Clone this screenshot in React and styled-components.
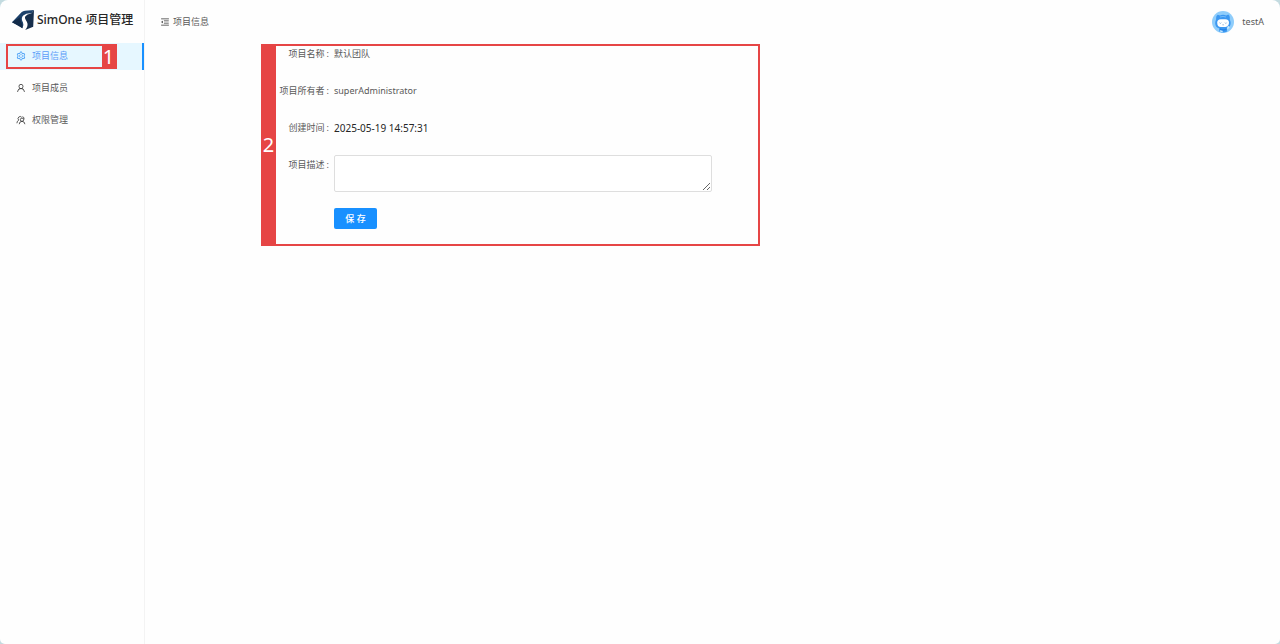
import React from "react";
import styled, { createGlobalStyle, css } from "styled-components";
import { AiOutlineMenuFold, AiOutlineSetting, AiOutlineUser } from "react-icons/ai";

const GlobalStyle = createGlobalStyle`
  *, *::before, *::after { box-sizing: border-box; }
  body {
    margin: 0;
    background: #c3dbe0;
    color: #595959;
    font: 9px/16px "Noto Sans", "Noto Sans CJK SC", sans-serif;
  }
  button, textarea { font: inherit; }
`;

const Shell = styled.div`
  display: flex;
  min-height: 100vh;
  background: #fefefe;
  border-radius: 8px 8px 5px 5px;
  overflow: hidden;
`;

const Sidebar = styled.aside`
  flex: 0 0 145px;
  border-right: 1px solid #f3f3f3;
`;

const Brand = styled.h1`
  display: flex;
  align-items: center;
  gap: 3px;
  height: 43px;
  margin: 0;
  padding: 0 0 3px 12px;
  color: #262626;
  font-size: 12px;
  font-weight: 500;
  line-height: 20px;
  white-space: nowrap;
`;

const Menu = styled.nav`
  display: flex;
  flex-direction: column;
  gap: 5px;
`;

const MenuLink = styled.a`
  position: relative;
  display: flex;
  align-items: center;
  gap: 6px;
  height: 27px;
  padding: 0 0 1px 16px;
  color: #595959;
  text-decoration: none;

  svg { width: 10px; height: 10px; color: #333; }

  ${({ $active }) =>
    $active &&
    css`
      background: #e6f7ff;
      border-right: 2px solid #1890ff;
      color: #5a9cf8;
      svg { color: #3b97f5; }
    `}
`;

const MenuMark = styled.span`
  position: absolute;
  top: 1px;
  left: 6px;
  display: flex;
  justify-content: flex-end;
  width: 111px;
  height: 25px;
  border: 2px solid #e64545;
`;

const MarkNumber = styled.span`
  display: flex;
  align-items: center;
  justify-content: center;
  width: ${({ $width }) => $width}px;
  background: #e64545;
  color: #fff;
  font-size: 20px;
  line-height: 20px;
`;

const Page = styled.div`
  flex: 1;
  min-width: 0;
`;

const TopBar = styled.header`
  display: flex;
  align-items: center;
  justify-content: space-between;
  height: 44px;
  padding: 0 16px 1px 15px;
`;

const Crumb = styled.div`
  display: flex;
  align-items: center;
  gap: 3px;
`;

const FoldButton = styled.button`
  display: flex;
  padding: 0;
  border: 0;
  background: none;
  color: #333;
  svg { width: 10px; height: 10px; }
`;

const Account = styled.div`
  display: flex;
  align-items: center;
  gap: 8px;
`;

const Panel = styled.main`
  position: relative;
  max-width: 499px;
  margin-left: 116px;
  padding: 0 48px 17px 15px;
`;

const PanelMark = styled.div`
  position: absolute;
  inset: 0;
  display: flex;
  border: 2px solid #e64545;
  border-left: 0;
  pointer-events: none;
`;

const Form = styled.form`
  display: grid;
  grid-template-columns: 53px 1fr;
  column-gap: 5px;
  row-gap: 21px;
  padding-top: 2px;
`;

const Label = styled.label`
  text-align: right;
  white-space: nowrap;
  &::after { content: ":"; margin-left: 2px; }
`;

const Value = styled.output`
  color: ${({ $dark }) => ($dark ? "#262626" : "#595959")};
  font-size: ${({ $dark }) => ($dark ? 10 : 9)}px;
`;

const Description = styled.textarea`
  display: block;
  width: 100%;
  height: 37px;
  margin-top: -2px;
  padding: 3px 7px;
  border: 1px solid #dedede;
  border-radius: 2px;
  background: #fff;
  resize: vertical;
`;

const SaveButton = styled.button`
  grid-column: 2;
  justify-self: start;
  min-width: 43px;
  height: 21px;
  margin-top: -5px;
  padding: 0 10px;
  border: 0;
  border-radius: 2px;
  background: #1890ff;
  color: #fff;
  font-weight: 500;
  word-spacing: normal;
`;

function Logo() {
  return (
    <svg width="22" height="20" viewBox="0 0 22 20" aria-hidden="true">
      <path d="M0 12.3 9.5 2.2Q11 .9 13 .7L22 0 19.5 3.2Q14.5 2.8 11.6 5.2C9 7.5 9.8 10 11 12.5Q12.2 15.5 10.4 18.3L6.8 15.6Z" fill="#1d426b" />
      <path d="M22 0 21.2 16.8 13.2 20Q16.2 16.3 15.4 13.2C14.7 10.5 12 8.7 13.4 6.3Q14.8 4.4 19.5 3.2Z" fill="#172f4c" />
      <path d="M0 12.3 8.4 7Q8 10 9.6 12.7Q11 15 10.4 18.3Z" fill="#122b49" />
    </svg>
  );
}

function RolesIcon() {
  return (
    <svg viewBox="0 0 20 20" fill="none" stroke="currentColor" strokeWidth="1.6" aria-hidden="true">
      <path d="M5.2 9.8A3.8 3.8 0 1 1 11.2 4.4" />
      <circle cx="12" cy="9.4" r="3.3" />
      <path d="M1.8 16.5q0-4.6 4-6.5M6.4 18.4q.3-5.7 5.6-5.7t5.8 5.7M13 3.2q4 1.2 3 5.6" />
    </svg>
  );
}

function Avatar() {
  return (
    <svg width="22" height="22" viewBox="0 0 22 22" role="img" aria-label="testA">
      <circle cx="11" cy="11" r="11" fill="#8fcdfb" />
      <path d="M4.2 8.3Q3.7 4.8 5.7 3.8L8 4.6Q11 3 14.2 4.6L16.3 3.6Q18.3 4.8 17.7 8.3C20 12.7 18 16.6 14.6 17.4L15.2 20.6Q11 22.4 7 20.6L7.4 17.4C3.5 16.6 2 12.5 4.2 8.3Z" fill="#3c98f1" />
      <path d="M5.2 11.8Q5.2 8.2 8.8 8.2h4.6q3.6 0 3.6 3.6T13.4 16H8.8Q5.2 16 5.2 11.8Z" fill="#fff" />
      <path d="m7.7 11.7.7.7.7-.7m4 0 .7.7.7-.7M10.5 13.8h1.2" fill="none" stroke="#5a91c8" strokeWidth=".8" />
      <path d="M8 17.2q3 2.2 6.4.1l.5 1.2q-3.8 2.4-7.2.2Z" fill="#2582e6" />
      <path d="m8 19.2 2.6.6.2 1.4-3.2-.7ZM16 14.8l1.8 1.2-1.9 2.3-1-1Z" fill="#c9eaff" />
      <path d="M8 6q3-1.2 6 0" fill="none" stroke="#76bdf9" strokeWidth=".9" />
    </svg>
  );
}

export default function App() {
  return (
    <>
      <GlobalStyle />
      <Shell>
        <Sidebar>
          <Brand>
            <Logo />
            SimOne 项目管理
          </Brand>
          <Menu>
            <MenuLink href="#info" $active>
              <AiOutlineSetting />
              项目信息
              <MenuMark>
                <MarkNumber $width={13}>1</MarkNumber>
              </MenuMark>
            </MenuLink>
            <MenuLink href="#members">
              <AiOutlineUser />
              项目成员
            </MenuLink>
            <MenuLink href="#roles">
              <RolesIcon />
              权限管理
            </MenuLink>
          </Menu>
        </Sidebar>
        <Page>
          <TopBar>
            <Crumb>
              <FoldButton type="button" aria-label="收起菜单">
                <AiOutlineMenuFold />
              </FoldButton>
              项目信息
            </Crumb>
            <Account>
              <Avatar />
              testA
            </Account>
          </TopBar>
          <Panel>
            <Form onSubmit={(event) => event.preventDefault()}>
              <Label htmlFor="name">项目名称</Label>
              <Value id="name">默认团队</Value>
              <Label htmlFor="owner">项目所有者</Label>
              <Value id="owner">superAdministrator</Value>
              <Label htmlFor="created">创建时间</Label>
              <Value id="created" $dark>2025-05-19 14:57:31</Value>
              <Label htmlFor="description">项目描述</Label>
              <Description id="description" />
              <SaveButton type="submit">保 存</SaveButton>
            </Form>
            <PanelMark>
              <MarkNumber $width={15}>2</MarkNumber>
            </PanelMark>
          </Panel>
        </Page>
      </Shell>
    </>
  );
}
